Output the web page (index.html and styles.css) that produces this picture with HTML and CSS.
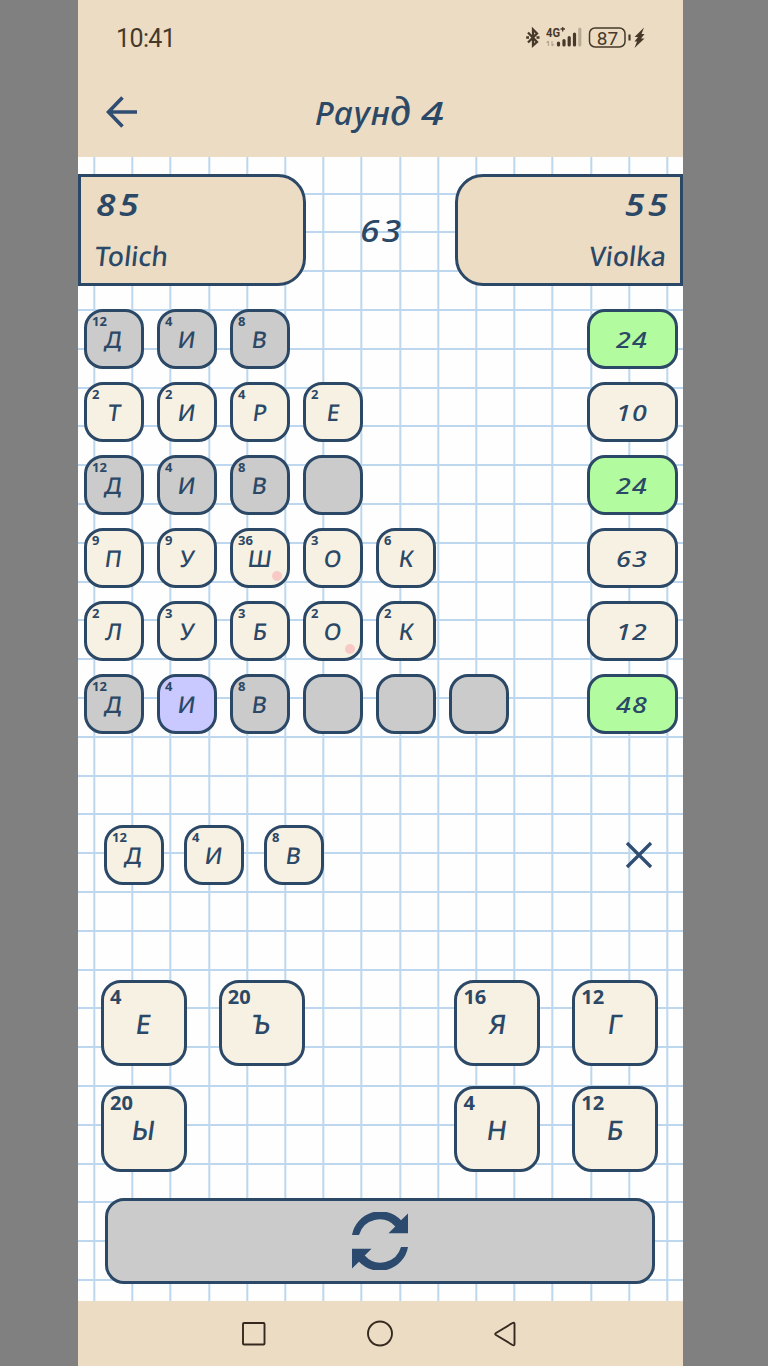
FILE: index.html
```html
<!DOCTYPE html>
<html lang="ru">
<head>
<meta charset="utf-8">
<title>Раунд 4</title>
<link rel="stylesheet" href="styles.css">
</head>
<body>
<div class="phone">
  <header class="top">
    <div class="status">
      <span class="clock">10:41</span>
      <svg class="indicators" width="124" height="26" viewBox="0 0 124 26">
        <g fill="none" stroke="#46392a" stroke-width="2.300">
          <path d="M5 7.500L14 17L10 20.500V4.500L14 8.500L5 17.500"/>
          <path d="M3.200 12.500H6M13.500 12.500H16.500" stroke-width="2.400"/>
          <rect x="66.500" y="3" width="35.500" height="19" rx="5.500" stroke-width="1.500"/>
        </g>
        <text class="net" x="23" y="12" textLength="14" lengthAdjust="spacingAndGlyphs">4G</text>
        <path d="M37.500 4H42M39.700 2V6.500" stroke="#46392a" stroke-width="1.300"/>
        <path d="M25.500 16V21M23.700 18L25.500 16M29 16V21M30.800 19L29 21" stroke="#b9aa95" stroke-width="1.300" fill="none"/>
        <g stroke="#46392a" stroke-width="3.200" stroke-linecap="round">
          <path d="M35.500 18V20M41 15.500V20M46.200 12.500V20M51.500 9V20"/>
          <path d="M56.800 4V20" stroke="#b9aa95"/>
        </g>
        <text class="charge" x="84.500" y="19.500" text-anchor="middle">87</text>
        <path d="M106.500 9.500V15.500" stroke="#46392a" stroke-width="2.200"/>
        <path d="M121 2.500L111.500 12H115L111.500 16.500H114L111.500 23L121.500 13.500H118L121.500 9H118.500Z" fill="#46392a"/>
      </svg>
    </div>
    <div class="bar">
      <svg class="back" width="32" height="32" viewBox="0 0 32 32"><path d="M16.500 1.500L2.500 16L16.500 30.500M2.500 16H31" fill="none" stroke="#2f4e71" stroke-width="3.600"/></svg>
      <h1 class="title">Раун<span class="de">д</span> <span class="num">4</span></h1>
    </div>
  </header>

  <main class="board">
    <section class="players">
      <div class="player left"><span class="points">85</span><span class="name">Tolich</span></div>
      <div class="middle"><span>63</span></div>
      <div class="player right"><span class="points">55</span><span class="name">Violka</span></div>
    </section>

    <section class="rows">
      <div class="row">
        <div class="tile used"><i>12</i><b>Д</b></div><div class="tile used"><i>4</i><b>И</b></div><div class="tile used"><i>8</i><b>В</b></div>
        <div class="score best"><b>24</b></div>
      </div>
      <div class="row">
        <div class="tile"><i>2</i><b>Т</b></div><div class="tile"><i>2</i><b>И</b></div><div class="tile"><i>4</i><b>Р</b></div><div class="tile"><i>2</i><b>Е</b></div>
        <div class="score"><b>10</b></div>
      </div>
      <div class="row">
        <div class="tile used"><i>12</i><b>Д</b></div><div class="tile used"><i>4</i><b>И</b></div><div class="tile used"><i>8</i><b>В</b></div><div class="tile used"></div>
        <div class="score best"><b>24</b></div>
      </div>
      <div class="row">
        <div class="tile"><i>9</i><b>П</b></div><div class="tile"><i>9</i><b>У</b></div><div class="tile dot"><i>36</i><b>Ш</b></div><div class="tile"><i>3</i><b>О</b></div><div class="tile"><i>6</i><b>К</b></div>
        <div class="score"><b>63</b></div>
      </div>
      <div class="row">
        <div class="tile"><i>2</i><b>Л</b></div><div class="tile"><i>3</i><b>У</b></div><div class="tile"><i>3</i><b>Б</b></div><div class="tile dot"><i>2</i><b>О</b></div><div class="tile"><i>2</i><b>К</b></div>
        <div class="score"><b>12</b></div>
      </div>
      <div class="row">
        <div class="tile used"><i>12</i><b>Д</b></div><div class="tile active"><i>4</i><b>И</b></div><div class="tile used"><i>8</i><b>В</b></div><div class="tile used"></div><div class="tile used"></div><div class="tile used"></div>
        <div class="score best"><b>48</b></div>
      </div>
    </section>

    <section class="picked">
      <div class="tile"><i>12</i><b>Д</b></div><div class="tile"><i>4</i><b>И</b></div><div class="tile"><i>8</i><b>В</b></div>
      <svg class="clear" width="28" height="28" viewBox="0 0 28 28"><path d="M2 2L26 26M26 2L2 26" stroke="#2f4e71" stroke-width="3.300"/></svg>
    </section>

    <section class="rack">
      <div class="tile big"><i>4</i><b>Е</b></div>
      <div class="tile big"><i>20</i><b>Ъ</b></div>
      <div class="gap"></div>
      <div class="tile big"><i>16</i><b>Я</b></div>
      <div class="tile big"><i>12</i><b>Г</b></div>
      <div class="tile big"><i>20</i><b>Ы</b></div>
      <div class="gap"></div>
      <div class="gap"></div>
      <div class="tile big"><i>4</i><b>Н</b></div>
      <div class="tile big"><i>12</i><b>Б</b></div>
    </section>

    <button class="shuffle">
      <svg width="56" height="58" viewBox="0 0 56 58" fill="#2b4a6e">
        <path id="half" d="M0 23A28.600 28.600 0 0 1 49 8.300L56 1.500V21.300H36.500L43.300 14.500A21.300 21.300 0 0 0 7 23Z"/>
        <use href="#half" transform="rotate(180 28 29)"/>
      </svg>
    </button>
  </main>

  <nav class="nav">
    <svg width="276" height="28" viewBox="0 0 276 28" fill="none" stroke="#35291f" stroke-width="1.900" stroke-linejoin="round">
      <rect x="2" y="3" width="21.500" height="21.500" rx="1"/>
      <circle cx="139" cy="13.500" r="12"/>
      <path d="M273.500 4Q273.500 2 271.500 3L255 13Q253.500 14 255 15L271.500 25Q273.500 26 273.500 24Z"/>
    </svg>
  </nav>
</div>
</body>
</html>
```
FILE: styles.css
```css
* { box-sizing: border-box; }

body {
  margin: 0;
  background: #808080;
  font-family: "Noto Sans", "Open Sans", sans-serif;
  color: #2b4866;
}

.phone {
  width: 605px;
  height: 1366px;
  margin-left: 78px;
  display: flex;
  flex-direction: column;
  overflow: hidden;
}

.top { height: 157px; background: #ecdcc4; }

.status {
  height: 75px;
  padding: 0 36px 0 38px;
  display: flex;
  align-items: center;
  justify-content: space-between;
}
.clock { font: 25px Roboto, sans-serif; color: #46392a; letter-spacing: -0.6px; margin-top: 2px; }
.indicators { flex: none; }
.net { font: bold 12px Roboto, sans-serif; fill: #46392a; }
.charge { font: 19px Roboto, sans-serif; fill: #46392a; }

.bar { height: 74px; padding-left: 28px; display: flex; align-items: center; }
.back { flex: none; }
.title {
  margin: 0 0 0 177px;
  font-size: 33px;
  font-weight: 500;
  font-style: italic;
  line-height: 40px;
  letter-spacing: 0.8px;
  white-space: nowrap;
}
.de { font-family: "Liberation Serif", serif; font-weight: normal; font-size: 39px; -webkit-text-stroke: 0.8px #2b4866; }
.num { display: inline-block; transform: scaleX(1.25); transform-origin: left; }

.board {
  height: 1144px;
  padding-top: 17px;
  background:
    repeating-linear-gradient(90deg, #bcd7ee 0 2px, transparent 2px 38.2px) 15.300px 0 / 100% 100%,
    repeating-linear-gradient(180deg, #bcd7ee 0 2px, transparent 2px 38.8px) 0 -3.300px / 100% 1200px,
    #fefefe;
}

.players { height: 112px; display: flex; }
.player {
  width: 228px;
  padding: 8px 14px 0 15px;
  border: 3px solid #2b4866;
  background: #ecdcc4;
  display: flex;
  flex-direction: column;
}
.left { border-radius: 0 28px 28px 0; }
.right { border-radius: 28px 0 0 28px; align-items: flex-end; }
.middle { flex: 1; display: flex; align-items: center; justify-content: center; }
.points, .middle span {
  font-size: 30px;
  line-height: 40px;
  font-style: italic;
  font-weight: 600;
  letter-spacing: 3px;
  transform: scaleX(1.18);
}
.middle span { font-weight: 500; padding: 2px 0 0 3px; letter-spacing: 2px; }
.left .points { transform-origin: left; }
.right .points { transform-origin: right; margin-right: -5px; }
.name {
  font-size: 27px;
  line-height: 36px;
  margin-top: 13px;
  font-weight: 500;
  transform: skewX(-6deg) scaleX(0.98);
}
.left .name { transform-origin: left; margin-left: -1px; }
.right .name { transform-origin: right; }

.rows { padding: 23px 5px 0 6px; display: flex; flex-direction: column; gap: 13px; }
.row { display: flex; gap: 13px; }

.tile {
  position: relative;
  width: 60px;
  height: 60px;
  border: 3px solid #2b4866;
  border-radius: 19px;
  background: #f7f1e3;
  display: flex;
  align-items: center;
  justify-content: center;
}
.tile b {
  font-size: 23px;
  line-height: 30px;
  font-weight: 500;
  transform: skewX(-8deg);
}
.tile i {
  position: absolute;
  left: 5px;
  top: 2px;
  font: bold 13px/14px "Noto Sans", sans-serif;
}
.used { background: #cbcbcb; }
.active { background: #c9c8ff; }
.dot::after {
  content: "";
  position: absolute;
  right: 5px;
  bottom: 4px;
  width: 10px;
  height: 10px;
  border-radius: 50%;
  background: #f8c9c5;
}

.score {
  width: 91px;
  height: 60px;
  margin-left: auto;
  border: 3px solid #2b4866;
  border-radius: 18px;
  background: #f7f1e3;
  display: flex;
  align-items: center;
  justify-content: center;
}
.score b {
  font-size: 22px;
  line-height: 30px;
  font-weight: 500;
  font-style: italic;
  letter-spacing: 1px;
  transform: scaleX(1.22);
}
.best { background: #b3fb9f; }

.picked { padding: 91px 30px 0 26px; display: flex; gap: 20px; align-items: center; }
.clear { margin-left: auto; }

.rack {
  padding: 95px 0 0 23px;
  display: grid;
  grid-template-columns: repeat(5, 86px);
  column-gap: 31.800px;
  row-gap: 19.500px;
}
.big { width: 86px; height: 86px; border-radius: 20px; }
.big b { font-size: 27px; padding-top: 2px; }
.big i { left: 6px; top: 3px; font-size: 20px; line-height: 22px; }

.shuffle {
  display: flex;
  align-items: center;
  justify-content: center;
  width: 550px;
  height: 86px;
  margin: 26.500px 0 0 27px;
  padding: 0;
  border: 3px solid #2b4866;
  border-radius: 19px;
  background: #cbcbcb;
}

.nav { height: 65px; background: #ecdcc4; display: flex; align-items: center; justify-content: center; }
.nav svg { margin-right: 3px; }
```
